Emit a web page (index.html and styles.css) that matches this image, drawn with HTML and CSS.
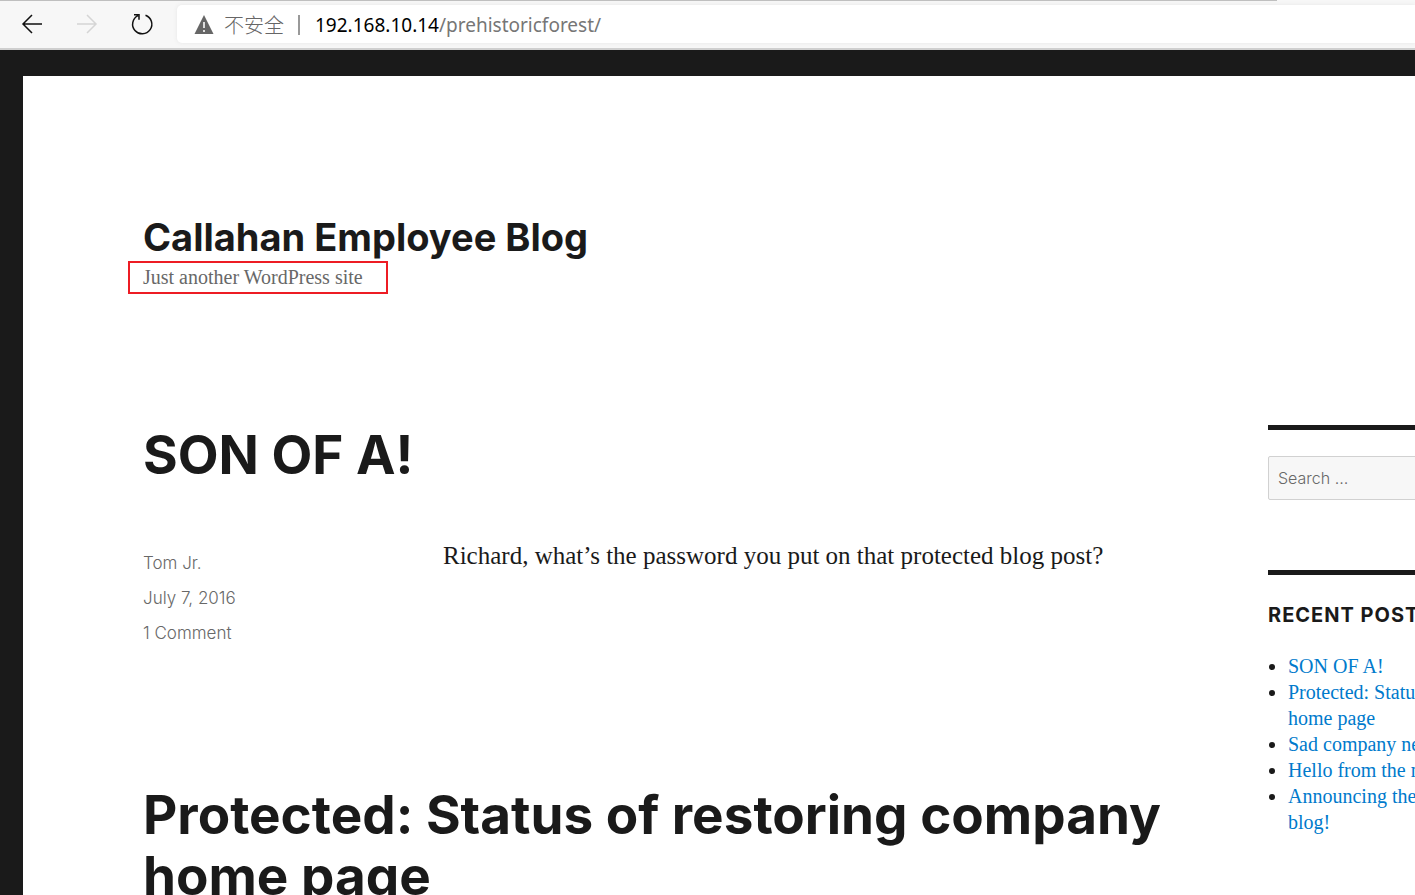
FILE: index.html
```html
<!DOCTYPE html>
<html lang="en">
<head>
<meta charset="utf-8">
<title>Callahan Employee Blog</title>
<link rel="stylesheet" href="styles.css">
</head>
<body>
<div class="toolbar">
  <button class="nav-button" type="button" aria-label="Back"><svg width="24" height="24" viewBox="0 0 24 24"><path d="M22 12H3M12 3l-9 9 9 9"/></svg></button>
  <button class="nav-button" type="button" aria-label="Forward" disabled><svg width="24" height="24" viewBox="0 0 24 24"><path d="M2 12h19M12 3l9 9-9 9"/></svg></button>
  <button class="nav-button" type="button" aria-label="Refresh"><svg width="24" height="24" viewBox="0 0 24 24"><path d="M15.500 3.200A9.600 9.600 0 1 1 8 3.600M4 2.700h5v5"/></svg></button>
  <div class="address">
    <svg class="warning" width="20" height="20" viewBox="0 0 20 20"><path d="M10 0L19.500 19H.5z" fill="#666"/><path d="M10 7v6M10 15v2" stroke="#ddd" stroke-width="2"/></svg>
    <span class="security">不安全</span>
    <span class="divider"></span>
    <span class="url">192.168.10.14<span class="path">/prehistoricforest/</span></span>
  </div>
</div>
<div class="site">
  <header class="site-header">
    <h1 class="site-title">Callahan Employee Blog</h1>
    <p class="tagline">Just another WordPress site</p>
  </header>
  <div class="content">
    <main class="posts">
      <article class="post">
        <h2 class="post-title">SON OF A!</h2>
        <div class="post-body">
          <footer class="meta">
            <span>Tom Jr.</span>
            <span>July 7, 2016</span>
            <span>1 Comment</span>
          </footer>
          <p class="text">Richard, what’s the password you put on that protected blog post?</p>
        </div>
      </article>
      <article class="post">
        <h2 class="post-title">Protected: Status of restoring company home page</h2>
      </article>
    </main>
    <aside class="sidebar">
      <section class="widget search-widget">
        <input class="search" type="search" placeholder="Search …" aria-label="Search">
      </section>
      <section class="widget">
        <h2 class="widget-title">Recent Posts</h2>
        <ul class="recent">
          <li><a href="#">SON OF A!</a></li>
          <li><a href="#">Protected: Status of restoring company<br>home page</a></li>
          <li><a href="#">Sad company news</a></li>
          <li><a href="#">Hello from the main office</a></li>
          <li><a href="#">Announcing the internal company<br>blog!</a></li>
        </ul>
      </section>
    </aside>
  </div>
</div>
</body>
</html>
```
FILE: styles.css
```css
* { box-sizing: border-box; }

body {
  margin: 0;
  height: 100vh;
  overflow: hidden;
  background: #1a1a1a;
  color: #1a1a1a;
  font-family: "Liberation Serif", serif;
}

h1, h2, p, ul { margin: 0; }
a { color: #007acc; text-decoration: none; }

.toolbar {
  display: flex;
  align-items: center;
  height: 50px;
  padding-left: 4px;
  background: linear-gradient(#bfbfbf, #bfbfbf) 0 0 / calc(100% - 138px) 1px no-repeat #f7f7f7;
  border-bottom: 2px solid #cfcfcf;
}

.nav-button {
  display: grid;
  place-items: center;
  width: 55px;
  height: 40px;
  padding: 0;
  border: 0;
  background: none;
}

.nav-button svg {
  fill: none;
  stroke: #111;
  stroke-width: 1.5;
}

.nav-button:disabled svg { stroke: #d5d5d5; }

.address {
  display: flex;
  align-items: center;
  flex: 1;
  height: 38px;
  margin-left: 8px;
  padding: 1px 0 0 17px;
  border-radius: 5px 0 0 5px;
  background: #fff;
  box-shadow: 0 0 4px #e6e6e6;
  font-family: "Noto Sans", "Noto Sans CJK SC", sans-serif;
  font-size: 19px;
  white-space: nowrap;
}

.security {
  margin-left: 10px;
  color: #666;
  font-family: "Noto Sans CJK SC", sans-serif;
  font-size: 20px;
  font-weight: 300;
}

.divider {
  width: 2px;
  height: 20px;
  margin: 0 15px 0 14px;
  background: #999;
}

.url { color: #000; }
.path { color: #767676; }

.site {
  min-height: 100vh;
  margin: 26px 0 0 23px;
  padding: 138px 0 0 120px;
  background: #fff;
}

.site-title {
  font: 700 38px/47px Inter, sans-serif;
}

.tagline {
  width: 260px;
  margin-left: -15px;
  padding-left: 13px;
  border: 2px solid #ed1c24;
  color: #686868;
  font-size: 20px;
  line-height: 29px;
}

.content {
  display: grid;
  grid-template-columns: minmax(0, 1fr) 147px;
  column-gap: 85px;
  margin-top: 131px;
}

.post { margin-bottom: 134px; }

.post-title {
  font: 700 53px/61px Inter, sans-serif;
}

.post-body {
  display: flex;
  margin-top: 60px;
}

.meta {
  display: flex;
  flex-direction: column;
  flex: 0 0 300px;
  color: #686868;
  font: 300 17px/35px Inter, sans-serif;
}

.text {
  font-size: 25px;
  line-height: 20px;
  white-space: nowrap;
}

.widget {
  width: 330px;
  border-top: 5px solid #1a1a1a;
}

.search-widget {
  padding: 26px 0 70px;
}

.search {
  display: block;
  width: 100%;
  height: 44px;
  padding: 0 9px;
  border: 1px solid #d1d1d1;
  border-radius: 2px;
  background: #f7f7f7;
  color: #686868;
  font: 300 16px/24px Inter, sans-serif;
}

.search::placeholder { color: #686868; }

.widget-title {
  margin-top: 27px;
  font: 700 20px/26px Inter, sans-serif;
  letter-spacing: 1px;
  text-transform: uppercase;
}

.recent {
  margin-top: 25px;
  padding-left: 20px;
  font-size: 20px;
  line-height: 26px;
  white-space: nowrap;
}
```
